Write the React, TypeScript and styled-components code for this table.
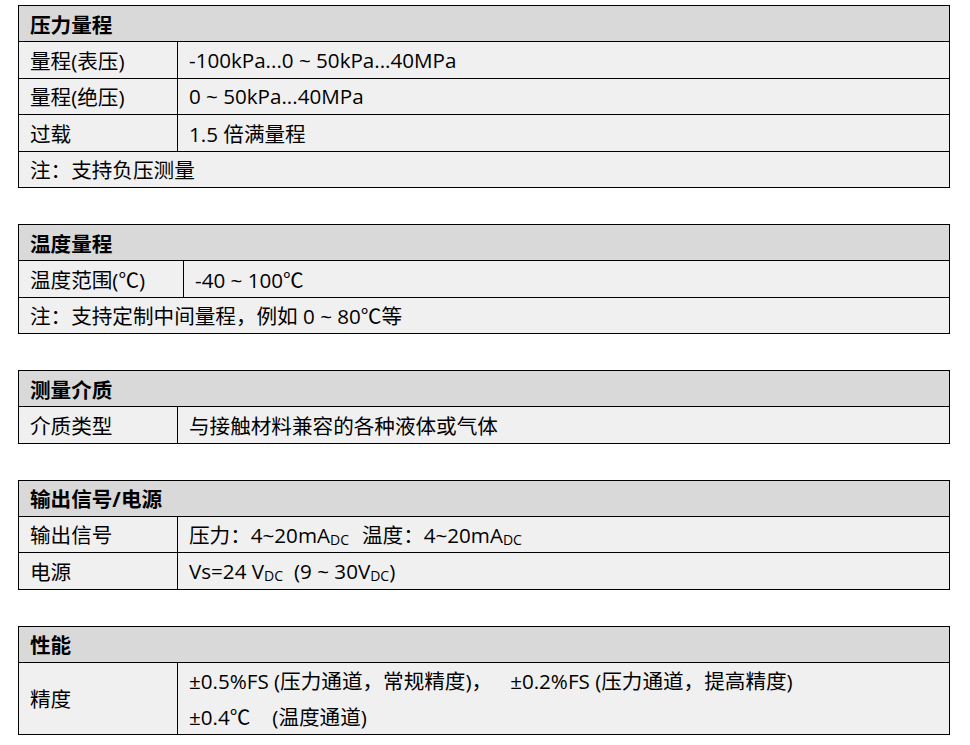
import React from 'react'
import styled, { createGlobalStyle } from 'styled-components'

const GlobalStyle = createGlobalStyle`
    body {
        margin: 0;
        background: #ffffff;
        font-family: "Open Sans", "Noto Sans CJK SC", sans-serif;
        color: #000;
    }
`

const Page = styled.div`
    width: 932px;
    padding: 5px 0 0 18px;
    display: flex;
    flex-direction: column;
    gap: 36px;
`

const Table = styled.div`
    border: 1px solid #000;
    background: #f0f0f0;
    font-size: 20.6px;
`

const Header = styled.div`
    height: 35px;
    background: #d9d9d9;
    display: flex;
    align-items: center;
    padding-left: 11px;
    font-weight: 700;
`

const Row = styled.div<{ $label: number }>`
    display: grid;
    grid-template-columns: ${p => p.$label}px 1fr;
    border-top: 1px solid #000;
    min-height: 35.5px;
`

const Note = styled.div`
    border-top: 1px solid #000;
    height: 35.5px;
    display: flex;
    align-items: center;
    padding-left: 11px;
`

const Label = styled.div`
    border-right: 1px solid #000;
    display: flex;
    align-items: center;
    padding-left: 11px;
`

const Value = styled.div`
    display: flex;
    flex-direction: column;
    justify-content: center;
    padding-left: 11px;
`

const Line = styled.div`
    height: 35.5px;
    display: flex;
    align-items: center;
    white-space: pre;
`

const Sub = styled.span`
    font-size: 14px;
    position: relative;
    top: 5px;
`

const Gap = styled.span<{ $w: number }>`
    display: inline-block;
    width: ${p => p.$w}px;
`

const App = () => {
    return (
        <Page>
            <GlobalStyle />
            <Table>
                <Header>压力量程</Header>
                <Row $label={159}>
                    <Label>量程(表压)</Label>
                    <Value><Line>-100kPa...0 ~ 50kPa...40MPa</Line></Value>
                </Row>
                <Row $label={159}>
                    <Label>量程(绝压)</Label>
                    <Value><Line>0 ~ 50kPa...40MPa</Line></Value>
                </Row>
                <Row $label={159}>
                    <Label>过载</Label>
                    <Value><Line>1.5 倍满量程</Line></Value>
                </Row>
                <Note>注：支持负压测量</Note>
            </Table>

            <Table>
                <Header>温度量程</Header>
                <Row $label={165}>
                    <Label>温度范围(℃)</Label>
                    <Value><Line>-40 ~ 100℃</Line></Value>
                </Row>
                <Note>注：支持定制中间量程，例如 0 ~ 80℃等</Note>
            </Table>

            <Table>
                <Header>测量介质</Header>
                <Row $label={159}>
                    <Label>介质类型</Label>
                    <Value><Line>与接触材料兼容的各种液体或气体</Line></Value>
                </Row>
            </Table>

            <Table>
                <Header>输出信号/电源</Header>
                <Row $label={159}>
                    <Label>输出信号</Label>
                    <Value><Line>压力：4~20mA<Sub>DC</Sub><Gap $w={13} />温度：4~20mA<Sub>DC</Sub></Line></Value>
                </Row>
                <Row $label={159}>
                    <Label>电源</Label>
                    <Value><Line>Vs=24 V<Sub>DC</Sub><Gap $w={11} />(9 ~ 30V<Sub>DC</Sub>)</Line></Value>
                </Row>
            </Table>

            <Table>
                <Header>性能</Header>
                <Row $label={159}>
                    <Label>精度</Label>
                    <Value>
                        <Line>±0.5%FS (压力通道，常规精度)，<Gap $w={18} />±0.2%FS (压力通道，提高精度)</Line>
                        <Line>±0.4℃<Gap $w={22} />(温度通道)</Line>
                    </Value>
                </Row>
            </Table>
        </Page>
    )
}

export default App
